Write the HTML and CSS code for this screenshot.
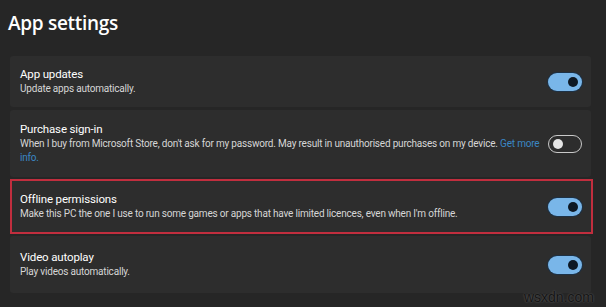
FILE: index.html
```html
<!DOCTYPE html>
<html lang="en">
<head>
<meta charset="utf-8">
<title>App settings</title>
<link rel="stylesheet" href="styles.css">
</head>
<body>
<div class="page">
  <h1 class="title">App settings</h1>
  <div class="list">
    <div class="card">
      <div class="text">
        <div class="name">App updates</div>
        <div class="desc">Update apps automatically.</div>
      </div>
      <div class="toggle on"><span class="knob"></span></div>
    </div>
    <div class="card tall">
      <div class="text">
        <div class="name">Purchase sign-in</div>
        <div class="desc">When I buy from Microsoft Store, don't ask for my password. May result in unauthorised purchases on my device. <span class="link">Get more</span> <span class="link">info.</span></div>
      </div>
      <div class="toggle off"><span class="knob"></span></div>
    </div>
    <div class="card highlighted">
      <div class="text">
        <div class="name">Offline permissions</div>
        <div class="desc">Make this PC the one I use to run some games or apps that have limited licences, even when I'm offline.</div>
      </div>
      <div class="toggle on"><span class="knob"></span></div>
    </div>
    <div class="card last">
      <div class="text">
        <div class="name">Video autoplay</div>
        <div class="desc">Play videos automatically.</div>
      </div>
      <div class="toggle on"><span class="knob"></span></div>
    </div>
  </div>
  <div class="watermark">wsxdn.com</div>
</div>
</body>
</html>
```
FILE: styles.css
```css
html, body {
  margin: 0;
  padding: 0;
  background: #262626;
  width: 606px;
  height: 307px;
  overflow: hidden;
}
.page {
  position: relative;
  height: 307px;
  box-sizing: border-box;
  padding: 10px 15px 0 10px;
  font-family: Roboto, "Noto Sans", sans-serif;
  color: #fff;
}
.title {
  margin: 0 0 0 -2px;
  height: 46px;
  font-family: "Open Sans", "Noto Sans", sans-serif;
  font-size: 19px;
  font-weight: 600;
  line-height: 26px;
  letter-spacing: -0.3px;
}
.list {
  display: flex;
  flex-direction: column;
  gap: 3px;
}
.card {
  position: relative;
  display: flex;
  align-items: center;
  justify-content: space-between;
  gap: 8px;
  padding: 11px 9px 11px 10px;
  min-height: 29px;
  background: #2d2d2d;
  border-radius: 3px;
}
.card.tall {
  padding: 12px 9px 12px 10px;
}
.card.highlighted {
  padding: 12px 9px 12px 10px;
}
.card.last {
  padding: 14px 9px 14px 10px;
}
.highlighted::after {
  content: "";
  position: absolute;
  left: 0;
  top: -1px;
  right: -2px;
  bottom: -1px;
  border: 2px solid #c12e3e;
  pointer-events: none;
}
.text {
  flex: 1;
}
.name {
  font-size: 11.5px;
  line-height: 15px;
  letter-spacing: -0.15px;
  color: #ffffff;
}
.desc {
  font-size: 10px;
  line-height: 14px;
  letter-spacing: -0.2px;
  color: #d6d6d6;
}
.link {
  color: #3b87c4;
}
.toggle {
  flex: none;
  width: 34px;
  height: 18px;
  box-sizing: border-box;
  border-radius: 9px;
  display: flex;
  align-items: center;
  padding: 0 4px;
}
.toggle.on {
  background: #79b6e9;
  justify-content: flex-end;
  box-shadow: 0 0 0 1px #1c3146;
}
.toggle.off {
  border: 1px solid #c9c9c9;
  justify-content: flex-start;
}
.knob {
  width: 10px;
  height: 10px;
  border-radius: 50%;
}
.toggle.on .knob {
  background: #0d1824;
}
.toggle.off .knob {
  background: #e4e4e4;
}
.watermark {
  position: absolute;
  right: 12px;
  bottom: 2px;
  font-family: "Liberation Sans", Arial, sans-serif;
  font-size: 14px;
  color: #151515;
  text-shadow: 0 0 2px rgba(255, 255, 255, 0.3);
}
```
